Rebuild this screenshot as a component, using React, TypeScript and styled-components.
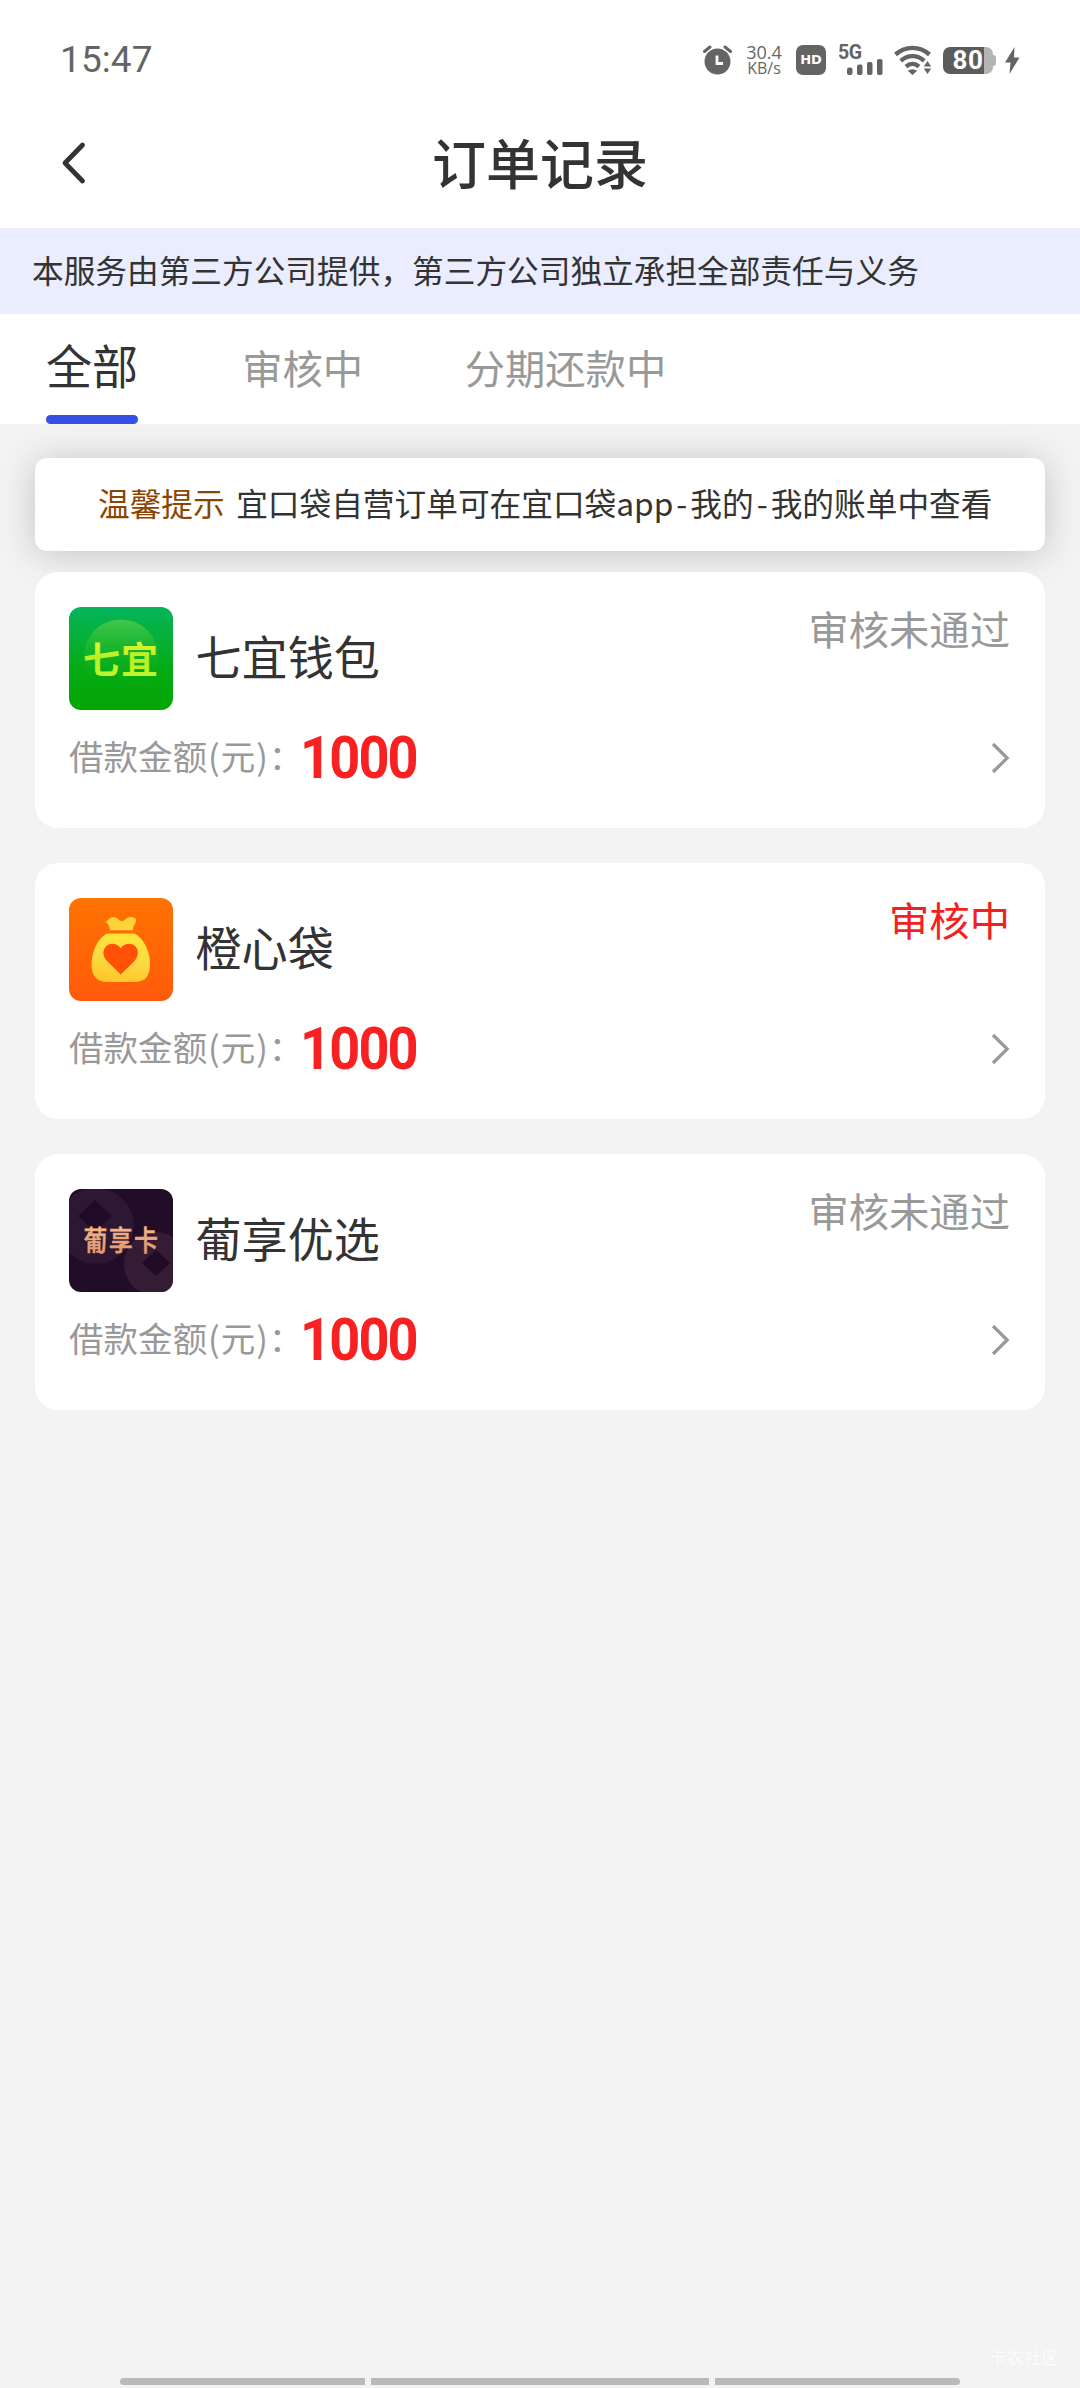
import React from "react";
import styled, { createGlobalStyle } from "styled-components";

const GlobalStyle = createGlobalStyle`
  * { box-sizing: border-box; }
  html, body { margin: 0; padding: 0; }
  body {
    background: #f3f3f3;
    color: #333;
    font-family: "Noto Sans CJK SC", sans-serif;
    -webkit-font-smoothing: antialiased;
  }
`;

const Page = styled.div`
  display: flex;
  flex-direction: column;
  width: 1080px;
  height: 2388px;
  overflow: hidden;
  background: #f3f3f3;
`;

const StatusBar = styled.div`
  display: flex;
  align-items: center;
  justify-content: space-between;
  flex: none;
  height: 120px;
  padding: 0 60px 0 60px;
  background: #fff;
  color: #646464;
`;

const Clock = styled.div`
  font: 400 37px/44px Roboto, sans-serif;
  letter-spacing: 0.1px;
`;

const StatusIcons = styled.div`
  display: flex;
  align-items: center;
  svg { display: block; flex: none; }
`;

const NetSpeed = styled.div`
  width: 40px;
  margin: 0 12px 0 12px;
  text-align: center;
  font-family: "Open Sans", sans-serif;
  color: #666;
`;

const SpeedValue = styled.div`
  font-size: 18px;
  line-height: 15px;
`;

const SpeedUnit = styled.div`
  font-size: 16px;
  line-height: 16px;
`;

const HdBadge = styled.div`
  display: flex;
  align-items: center;
  justify-content: center;
  width: 30px;
  height: 30px;
  border-radius: 7px;
  background: #646464;
  color: #fff;
  font: 700 13px/30px "DejaVu Sans", sans-serif;
`;

const Signal = styled.div`
  display: flex;
  flex-direction: column;
  margin-left: 12px;
  width: 45px;
  height: 30px;
`;

const SignalLabel = styled.span`
  height: 14px;
  font: 700 19.5px/15px Roboto, sans-serif;
  letter-spacing: -0.5px;
`;

const Battery = styled.div`
  display: flex;
  align-items: center;
  margin: 1px 9px 0 11px;
`;

const BatteryBody = styled.div`
  width: 50px;
  height: 27px;
  border-radius: 7px;
  background: linear-gradient(90deg, #5c5c5c 0 41px, #b4b4b4 41px);
  color: #fff;
  text-align: center;
  font: 700 26px/27px Roboto, sans-serif;
  letter-spacing: 0.5px;
`;

const BatteryTip = styled.div`
  width: 3px;
  height: 11px;
  border-radius: 0 3px 3px 0;
  background: #b4b4b4;
`;

const NavBar = styled.header`
  display: grid;
  grid-template-columns: 1fr auto 1fr;
  align-items: center;
  flex: none;
  height: 108px;
  padding: 0 60px 22px;
  background: #fff;
  svg { display: block; }
`;

const Title = styled.h1`
  margin: 0 0 3px;
  font-size: 54px;
  line-height: 78px;
  font-weight: 500;
  white-space: nowrap;
`;

const Disclaimer = styled.div`
  flex: none;
  height: 86px;
  padding-left: 32px;
  background: #e9edfd;
  font-size: 31.68px;
  line-height: 82px;
  white-space: nowrap;
`;

const Tabs = styled.nav`
  display: flex;
  flex: none;
  height: 110px;
  padding-left: 46px;
  background: #fff;
`;

const Tab = styled.div<{ $active?: boolean }>`
  display: flex;
  flex-direction: column;
  justify-content: space-between;
  margin-right: ${(p) => (p.$active ? 104 : 101.5)}px;
  color: ${(p) => (p.$active ? "#333" : "#999")};
  font-size: ${(p) => (p.$active ? 46.08 : 40.32)}px;
  line-height: ${(p) => (p.$active ? 101 : 105)}px;
  white-space: nowrap;
`;

const Indicator = styled.div`
  flex: none;
  height: 9px;
  border-radius: 4.5px;
  background: #3551e4;
`;

const TabLabel = styled.span`
  display: block;
`;

const Content = styled.main`
  display: flex;
  flex-direction: column;
  flex: 1;
  padding: 34px 35px 0;
`;

const Notice = styled.div`
  flex: none;
  height: 93px;
  margin-bottom: 21px;
  padding-left: 63px;
  border-radius: 12px;
  background: #fff;
  box-shadow: 0 3px 36px rgba(0, 0, 0, 0.2);
  font-size: 31.68px;
  line-height: 88px;
  white-space: nowrap;
`;

const NoticeLabel = styled.span`
  margin-right: 11.5px;
  color: #8a4500;
`;

const Dash = styled.span`
  display: inline-block;
  width: 17px;
  text-align: center;
`;

const CardList = styled.div`
  display: flex;
  flex-direction: column;
  gap: 35px;
  z-index: 1;
`;

const Card = styled.section`
  height: 256px;
  padding: 35px 35px 0 34px;
  border-radius: 23px;
  background: #fff;
`;

const CardHead = styled.div`
  display: flex;
  align-items: flex-start;
  height: 103px;
`;

const LogoBox = styled.div`
  flex: none;
  width: 104px;
  height: 103px;
  border-radius: 12px;
  overflow: hidden;
  svg { display: block; }
`;

const Merchant = styled.div`
  flex: 1;
  padding-left: 22.5px;
  font-size: 46.08px;
  line-height: 97px;
`;

const Status = styled.div<{ $active?: boolean }>`
  font-size: 40.32px;
  line-height: 42px;
  color: ${(p) => (p.$active ? "#f51f22" : "#999")};
`;

const CardRow = styled.div`
  display: flex;
  align-items: flex-start;
  height: 96px;
  svg { display: block; margin: 32px 0 0 auto; }
`;

const AmountLabel = styled.span`
  width: 230.5px;
  color: #999;
  font-size: 34.56px;
  line-height: 91px;
  white-space: nowrap;
`;

const Paren = styled.span`
  display: inline-block;
  width: 13.5px;
  text-align: center;
`;

const Amount = styled.span`
  color: #f92021;
  font: 700 58.5px/96px Roboto, sans-serif;
  letter-spacing: -2px;
  transform: scaleX(0.925);
  transform-origin: left center;
`;

const Footer = styled.footer`
  display: flex;
  flex-direction: column;
  flex: none;
  height: 46px;
`;

const Watermark = styled.div`
  height: 36px;
  padding-right: 21px;
  text-align: right;
  color: #fbfbfb;
  font-size: 17.5px;
  line-height: 30px;
`;

const HomeBar = styled.div`
  display: flex;
  gap: 6px;
  width: 840px;
  height: 7px;
  margin: 0 auto;
  border-radius: 4px;
  overflow: hidden;
`;

const HomeSegment = styled.div<{ $w: number }>`
  width: ${(p) => p.$w}px;
  background: #b9b9b9;
`;

const AlarmIcon = () => (
  <svg width="29" height="30" viewBox="0 0 29 30">
    <circle cx="14.5" cy="16.5" r="13" fill="#646464" />
    <path d="M1.5 6.5 7 2M27.5 6.5 22 2" stroke="#646464" strokeWidth="3" strokeLinecap="round" />
    <path d="M14 10.5v8h6" fill="none" stroke="#fff" strokeWidth="2.8" />
  </svg>
);

const SignalBars = () => (
  <svg width="45" height="16" viewBox="0 14 45 16" fill="#646464">
    <rect x="9" y="22.5" width="5.5" height="7.5" rx="2" />
    <rect x="19" y="19.5" width="5.5" height="10.5" rx="2" />
    <rect x="29" y="17" width="5.5" height="13" rx="2" />
    <rect x="39" y="14" width="5.5" height="16" rx="2" />
  </svg>
);

const WifiSvg = styled.svg`
  margin-left: 11px;
`;

const WifiIcon = () => (
  <WifiSvg width="38" height="30" viewBox="0 0 38 30">
    <g fill="none" stroke="#646464" strokeWidth="4.4">
      <path d="M1.5 9.5C11.5 .6 25.5 .6 35.5 9.5" />
      <path d="M6.8 15.800c7-6.300 16.400-6.300 23.400 0" />
      <path d="M12 21.600c4-3.600 9-3.600 13 0" />
    </g>
    <path d="M13.800 25.800c3-2 6.400-2 9.400 0l-4.700 4.200z" fill="#646464" />
    <path d="M33.500 16l3.700 5.500h-7.400zM33.500 29l3.700-5.500h-7.400z" fill="#646464" stroke="#fff" strokeWidth="1.500" paintOrder="stroke" />
  </WifiSvg>
);

const BoltIcon = () => (
  <svg width="15" height="27" viewBox="0 0 15 27">
    <path d="M9.500 0 0 15.500h5.500L4.500 27 14.500 10.500H9z" fill="#646464" />
  </svg>
);

const BackIcon = () => (
  <svg width="28" height="44" viewBox="0 0 28 44">
    <path d="M22.500 4 5 22 22.500 40" fill="none" stroke="#333" strokeWidth="4.800" strokeLinecap="round" strokeLinejoin="round" />
  </svg>
);

const ChevronIcon = () => (
  <svg width="19" height="32" viewBox="0 0 19 32">
    <path d="M2 2 16.200 16 2 30" fill="none" stroke="#999" strokeWidth="3.200" />
  </svg>
);

const QiyiLogo = () => (
  <svg width="104" height="103" viewBox="0 0 104 103">
    <defs>
      <linearGradient id="qyBg" x1="0" y1="0" x2="0" y2="1">
        <stop offset="0" stopColor="#05b55c" />
        <stop offset="0.6" stopColor="#05ab15" />
        <stop offset="1" stopColor="#04a603" />
      </linearGradient>
      <linearGradient id="qyDisc" x1="0" y1="0" x2="0" y2="1">
        <stop offset="0" stopColor="#43c84b" />
        <stop offset="0.85" stopColor="#08aa0c" stopOpacity="0" />
      </linearGradient>
      <linearGradient id="qyText" x1="0" y1="0" x2="0" y2="1">
        <stop offset="0.1" stopColor="#f4f53c" />
        <stop offset="0.5" stopColor="#b5f021" />
        <stop offset="1" stopColor="#c8f53a" />
      </linearGradient>
    </defs>
    <rect width="104" height="103" fill="url(#qyBg)" />
    <circle cx="52" cy="50" r="37.500" fill="url(#qyDisc)" />
    <text x="14" y="67" fontFamily="Noto Sans CJK SC" fontWeight="700" fontSize="37" letterSpacing="1" fill="url(#qyText)">七宜</text>
  </svg>
);

const OrangeLogo = () => (
  <svg width="104" height="103" viewBox="0 0 104 103">
    <defs>
      <linearGradient id="orBg" x1="0" y1="0" x2="0" y2="1">
        <stop offset="0" stopColor="#ff7300" />
        <stop offset="1" stopColor="#ff5a0c" />
      </linearGradient>
      <linearGradient id="orBag" x1="0.6" y1="0" x2="0.4" y2="1">
        <stop offset="0" stopColor="#ffe637" />
        <stop offset="0.5" stopColor="#fbdb45" />
        <stop offset="1" stopColor="#ffc629" />
      </linearGradient>
    </defs>
    <rect width="104" height="103" fill="url(#orBg)" />
    <path d="M36.500 23.500c2.500-.2 3.500-4.500 8-4.500 4 0 5 3.500 8.500 4 3.500-.5 4-4 8.500-4 3.500 0 6.500 1.500 5.500 4.500-.8 3-3.200 5-3.200 8.700H41c-.5-4-1.500-6-4.500-8.700z" fill="#fdd33a" />
    <path d="M37.500 35.500h28C74 40 81 52.500 81 65.500 81 78 76.500 84 65.500 84h-27C27 84 22.500 77 22.500 67c0-13.500 6-26 15-31.500z" fill="url(#orBag)" />
    <path d="M51.700 76.500 38.500 63.500C33 58 33.500 51.500 37.500 48c4.500-3.700 11-2.500 14.200 2.200C55 45.500 61.500 44.300 66 48c4 3.500 4 10-1 15.500z" fill="#ff5207" />
  </svg>
);

const GrapeLogo = () => (
  <svg width="104" height="104" viewBox="0 0 104 104">
    <defs>
      <linearGradient id="grText" x1="0" y1="0" x2="0" y2="1">
        <stop offset="0" stopColor="#f8c79a" />
        <stop offset="1" stopColor="#e08a62" />
      </linearGradient>
    </defs>
    <rect width="104" height="104" fill="#220d28" />
    <circle cx="27" cy="37" r="38" fill="#2e1732" />
    <path d="M26 11 43 27 26 43 9 27z" fill="#1f0b25" />
    <circle cx="87" cy="75" r="32" fill="#351c35" />
    <path d="M87 61 101 74 87 87 73 74z" fill="#1f0b25" />
    <g transform="translate(14.500 62) scale(0.920 1.080)">
      <text fontFamily="Noto Sans CJK SC" fontWeight="500" fontSize="26" letterSpacing="1.500" fill="url(#grText)" stroke="#eba67b" strokeWidth="0.500">葡享卡</text>
    </g>
  </svg>
);

interface Order {
  name: string;
  status: string;
  active?: boolean;
  amount: number;
  Logo: () => React.JSX.Element;
}

const orders: Order[] = [
  { name: "七宜钱包", status: "审核未通过", amount: 1000, Logo: QiyiLogo },
  { name: "橙心袋", status: "审核中", active: true, amount: 1000, Logo: OrangeLogo },
  { name: "葡享优选", status: "审核未通过", amount: 1000, Logo: GrapeLogo },
];

const tabs = ["全部", "审核中", "分期还款中"];

export default function App() {
  return (
    <>
      <GlobalStyle />
      <Page>
        <StatusBar>
          <Clock>15:47</Clock>
          <StatusIcons>
            <AlarmIcon />
            <NetSpeed>
              <SpeedValue>30.4</SpeedValue>
              <SpeedUnit>KB/s</SpeedUnit>
            </NetSpeed>
            <HdBadge>HD</HdBadge>
            <Signal>
              <SignalLabel>5G</SignalLabel>
              <SignalBars />
            </Signal>
            <WifiIcon />
            <Battery>
              <BatteryBody>80</BatteryBody>
              <BatteryTip />
            </Battery>
            <BoltIcon />
          </StatusIcons>
        </StatusBar>
        <NavBar>
          <BackIcon />
          <Title>订单记录</Title>
        </NavBar>
        <Disclaimer>本服务由第三方公司提供，第三方公司独立承担全部责任与义务</Disclaimer>
        <Tabs>
          {tabs.map((label, i) => (
            <Tab key={label} $active={i === 0}>
              <TabLabel>{label}</TabLabel>
              {i === 0 && <Indicator />}
            </Tab>
          ))}
        </Tabs>
        <Content>
          <Notice>
            <NoticeLabel>温馨提示</NoticeLabel>
            <span>
              宜口袋自营订单可在宜口袋app<Dash>-</Dash>我的<Dash>-</Dash>我的账单中查看
            </span>
          </Notice>
          <CardList>
            {orders.map(({ name, status, active, amount, Logo }) => (
              <Card key={name}>
                <CardHead>
                  <LogoBox>
                    <Logo />
                  </LogoBox>
                  <Merchant>{name}</Merchant>
                  <Status $active={active}>{status}</Status>
                </CardHead>
                <CardRow>
                  <AmountLabel>
                    借款金额<Paren>(</Paren>元<Paren>)</Paren>：
                  </AmountLabel>
                  <Amount>{amount}</Amount>
                  <ChevronIcon />
                </CardRow>
              </Card>
            ))}
          </CardList>
        </Content>
        <Footer>
          <Watermark>卡农社区</Watermark>
          <HomeBar>
            <HomeSegment $w={245} />
            <HomeSegment $w={338} />
            <HomeSegment $w={245} />
          </HomeBar>
        </Footer>
      </Page>
    </>
  );
}
